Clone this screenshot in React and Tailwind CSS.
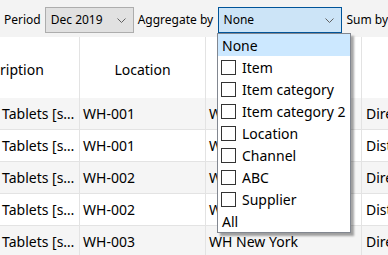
import React from "react";

const rows = [
  { desc: "Tablets [s…", loc: "WH-001", name: "WH Boston", channel: "Direct" },
  { desc: "Tablets [s…", loc: "WH-001", name: "WH Boston", channel: "Distributor" },
  { desc: "Tablets [s…", loc: "WH-002", name: "WH Chicago", channel: "Direct" },
  { desc: "Tablets [s…", loc: "WH-002", name: "WH Chicago", channel: "Distributor" },
  { desc: "Tablets [s…", loc: "WH-003", name: "WH New York", channel: "Direct" },
];

const options = ["Item", "Item category", "Item category 2", "Location", "Channel", "ABC", "Supplier"];

const Chevron = () => (
  <svg width="9" height="5" viewBox="0 0 9 5" className="shrink-0">
    <path d="M0.5 0.5 L4.5 4.5 L8.5 0.5" fill="none" stroke="#606060" strokeWidth="1" />
  </svg>
);

export default function App() {
  return (
    <div
      className="relative w-[388px] h-[255px] overflow-hidden bg-white text-black"
      style={{ fontFamily: '"Noto Sans", "Open Sans", sans-serif' }}
    >
      {/* toolbar */}
      <div className="flex items-center h-[37px] pt-[3px] bg-[#f3f3f3] text-[12px] whitespace-nowrap">
        <span className="ml-[4px]">Period</span>
        <div className="ml-[4px] w-[89px] h-[26px] flex items-center justify-between pl-[5px] pr-[7px] bg-[#e1e1e1] border border-[#adadad]">
          <span>Dec 2019</span>
          <Chevron />
        </div>
        <span className="ml-[4px] w-[77px]">Aggregate by</span>
        <div className="ml-[3px] w-[125px] h-[26px] flex items-center justify-between pl-[5px] pr-[7px] bg-[#cce4f7] border border-[#005499]">
          <span>None</span>
          <Chevron />
        </div>
        <span className="ml-[4px]">Sum by</span>
      </div>

      {/* table */}
      <div className="text-[14px] whitespace-nowrap">
        <div className="flex h-[61px]">
          <div className="w-[80px] border-r border-[#e3e3e3] flex items-center overflow-hidden pt-[3px]">
            <span>ription</span>
          </div>
          <div className="w-[126px] border-r border-[#e3e3e3] flex items-center justify-center pt-[3px]">
            Location
          </div>
          <div className="w-[156px] border-r border-[#e3e3e3]" />
          <div className="flex-1" />
        </div>
        {rows.map((r, i) => (
          <div
            key={i}
            className={`flex h-[32px] border-b border-[#e3e3e3] ${i % 2 === 0 ? "bg-[#f5f5f5]" : "bg-white"}`}
          >
            <div className="w-[80px] border-r border-[#e3e3e3] flex items-center pl-[2px] overflow-hidden">
              {r.desc}
            </div>
            <div className="w-[126px] border-r border-[#e3e3e3] flex items-center pl-[3px]">{r.loc}</div>
            <div className="w-[156px] border-r border-[#e3e3e3] flex items-center pl-[3px]">{r.name}</div>
            <div className="flex-1 flex items-center pl-[4px] overflow-hidden">{r.channel}</div>
          </div>
        ))}
      </div>

      {/* open dropdown */}
      <div className="absolute left-[217px] top-[33px] w-[134px] bg-white border border-[#828790] shadow-[3px_3px_2px_rgba(0,0,0,0.35)] text-[14px] whitespace-nowrap">
        <div className="h-[22px] flex items-center pl-[4px] bg-[#cce8ff]">None</div>
        {options.map((o) => (
          <div key={o} className="h-[22px] flex items-center pl-[3px]">
            <span className="w-[15px] h-[15px] border border-[#333333] bg-white shrink-0" />
            <span className="ml-[6px]">{o}</span>
          </div>
        ))}
        <div className="h-[22px] flex items-center pl-[4px]">All</div>
      </div>
    </div>
  );
}
